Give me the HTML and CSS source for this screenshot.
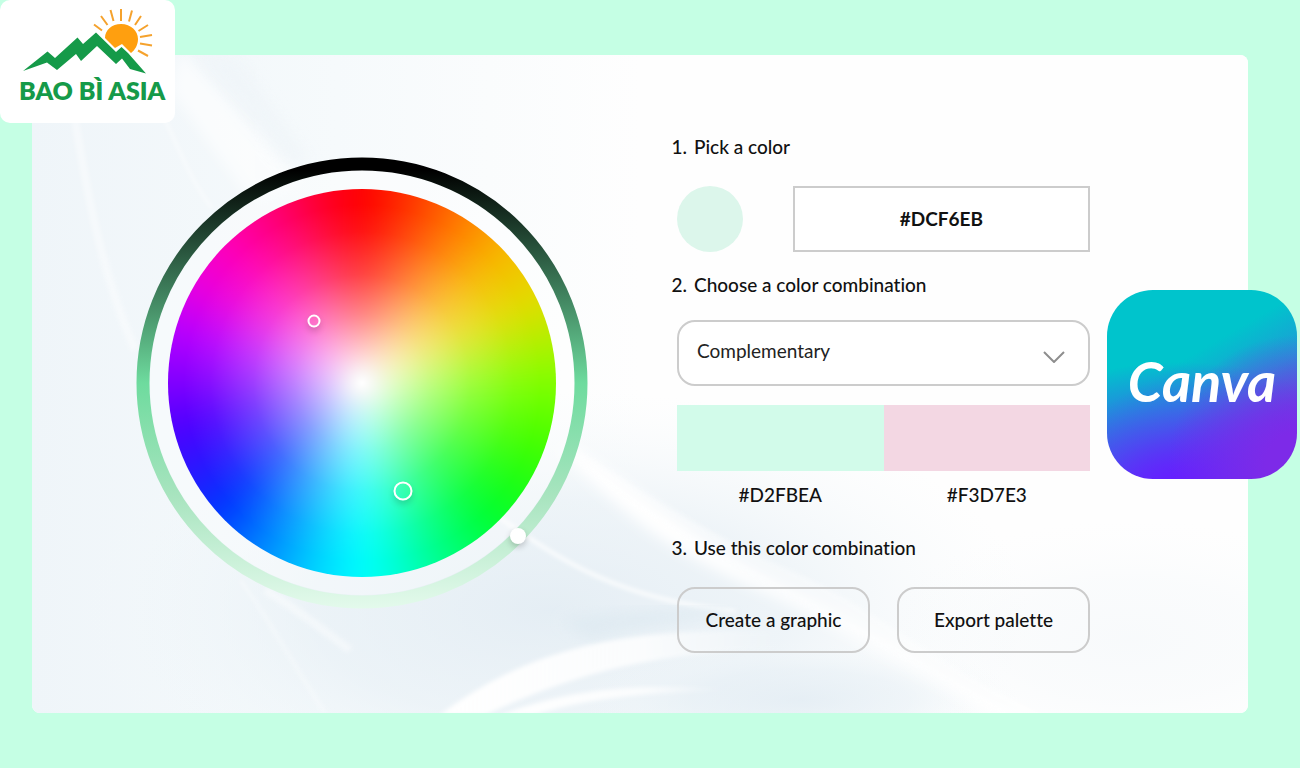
FILE: index.html
```html
<!DOCTYPE html>
<html lang="en">
<head>
  <meta charset="UTF-8" />
  <meta name="viewport" content="width=device-width, initial-scale=1" />
  <title>Color Wheel - Bao Bì Asia</title>
  <link rel="stylesheet" href="styles.css">
</head>
<body>

  <header class="brand">
    <svg class="brand-logo" viewBox="0 0 175 123" role="img" aria-label="Bao Bì Asia">
      <g stroke="#f5a22d" stroke-width="2">
        <path d="M94 24.500L102 30.500M101 16L107.500 25M110.500 10L113.500 21M121 9V21M132 10.500L129 21.500M141 16L135 25M148 25L138.500 31M152 35L140 37M152 45.500L140 43.500M148 56L138 50.500" />
      </g>
      <path fill="#ff9f0f" d="M105 38C105 30 112 24 121 24C131 24 138 31 138 39C138 45 135 50 131 53L122 44L115 48Z" />
      <path fill="#159a49" d="M23 71L47.500 51.500L55 58L77.500 37.500L83 44L96 32.500L116 52L121.500 47L128 53L146 73.500L130 69L122 58.500L116 64L97 46L81 61L76 54L57 70L47 62.500Z" />
      <text class="brand-name" x="19" y="100">BAO BÌ ASIA</text>
    </svg>
  </header>

  <main class="card">
    <svg class="waves" viewBox="32 55 1216 658" preserveAspectRatio="none" aria-hidden="true">
      <defs>
        <linearGradient id="side" x1="0" x2="1" y1="0" y2="0">
          <stop offset="0" stop-color="#eff5f9" />
          <stop offset="0.25" stop-color="#f6fafc" />
          <stop offset="0.5" stop-color="#fefefe" />
        </linearGradient>
        <radialGradient id="pool">
          <stop offset="0" stop-color="#dfeaf2" />
          <stop offset="0.5" stop-color="#e6eff5" stop-opacity="0.8" />
          <stop offset="1" stop-color="#f4f9fb" stop-opacity="0" />
        </radialGradient>
        <linearGradient id="ribbon" x1="0" x2="1" y1="0" y2="0">
          <stop offset="0" stop-color="#fff" />
          <stop offset="0.6" stop-color="#fff" stop-opacity="0.8" />
          <stop offset="1" stop-color="#fff" stop-opacity="0" />
        </linearGradient>
        <filter id="soft"><feGaussianBlur stdDeviation="7" /></filter>
        <filter id="edge"><feGaussianBlur stdDeviation="2" /></filter>
      </defs>
      <rect x="32" y="55" width="1216" height="658" fill="url(#side)" />
      <ellipse cx="550" cy="610" rx="480" ry="220" fill="url(#pool)" opacity="0.8" />
      <ellipse cx="800" cy="700" rx="220" ry="60" fill="url(#pool)" opacity="0.7" />
      <ellipse cx="1130" cy="640" rx="260" ry="120" fill="url(#pool)" opacity="0.2" />
      <path d="M570 445C640 490 690 540 790 590S950 690 1060 725H1010C930 680 850 630 760 590S640 530 560 450Z" fill="#fff" filter="url(#soft)" />
      <path d="M570 445C640 490 700 530 790 570S940 670 1060 720H1010C930 670 850 630 760 580S650 520 575 460Z" fill="#fff" filter="url(#edge)" opacity="0.4" />
      <path d="M500 518C560 560 620 600 735 611" fill="none" stroke="#fff" stroke-width="3" filter="url(#edge)" />
      <path d="M560 620C620 610 680 606 740 611C700 624 640 625 590 640Z" fill="#dbe8f0" filter="url(#soft)" opacity="0.6" />
      <path d="M440 715C520 655 610 625 780 632V650C660 650 570 675 485 715Z" fill="url(#ribbon)" filter="url(#edge)" />
      <path d="M500 715C570 690 630 682 730 690C640 692 580 700 535 715Z" fill="url(#ribbon)" filter="url(#edge)" />
      <path d="M180 50L300 180L250 200L170 90Z" fill="#fff" opacity="0.6" filter="url(#soft)" />
      <path d="M195 50L240 60L310 160L290 165Z" fill="#edf3f7" opacity="0.5" filter="url(#soft)" />
      <g fill="none" stroke="#fff" opacity="0.4" filter="url(#edge)">
        <path stroke-width="8" d="M75 120C85 180 100 270 135 350" />
        <path stroke-width="4" d="M165 120C180 150 190 180 212 208" />
        <path stroke-width="3" d="M240 580C270 620 290 660 325 713" />
        <path stroke-width="8" d="M265 590C290 605 310 620 350 650" />
      </g>
    </svg>

    <div class="wheel">
      <svg class="ring" viewBox="0 0 452 452" aria-hidden="true">
        <defs>
          <linearGradient id="shade" gradientUnits="userSpaceOnUse" x1="0" x2="0" y1="0" y2="452">
            <stop offset="0.03" stop-color="#000" />
            <stop offset="0.25" stop-color="#33694c" />
            <stop offset="0.5" stop-color="#6edb9e" />
            <stop offset="0.75" stop-color="#a8e4bf" />
            <stop offset="1" stop-color="#e4faec" />
          </linearGradient>
        </defs>
        <circle cx="226" cy="226" r="212" fill="#fff" opacity="0.35" />
        <circle cx="226" cy="226" r="219" fill="none" stroke="url(#shade)" stroke-width="13" />
      </svg>
      <div class="hues"></div>
      <button class="marker marker-small" type="button" aria-label="Complementary color"></button>
      <button class="marker marker-large" type="button" aria-label="Base color"></button>
      <button class="knob" type="button" aria-label="Brightness"></button>
    </div>

    <form class="panel">
      <h2><span class="step">1.</span><label for="hex">Pick a color</label></h2>
      <div class="pick">
        <span class="dot"></span>
        <input class="hex" id="hex" type="text" value="#DCF6EB" />
      </div>

      <h2><span class="step">2.</span><label for="combo">Choose a color combination</label></h2>
      <div class="combo">
        <select id="combo">
          <option>Complementary</option>
          <option>Monochromatic</option>
          <option>Analogous</option>
          <option>Triadic</option>
        </select>
        <svg class="chevron" viewBox="0 0 22 12" aria-hidden="true">
          <path d="M1 1L11 11L21 1" fill="none" stroke="#8e8e8e" stroke-width="2" />
        </svg>
      </div>
      <div class="swatches">
        <div class="swatch"><span class="fill mint"></span>#D2FBEA</div>
        <div class="swatch"><span class="fill pink"></span>#F3D7E3</div>
      </div>

      <h2><span class="step">3.</span>Use this color combination</h2>
      <div class="actions">
        <button type="button">Create a graphic</button>
        <button type="button">Export palette</button>
      </div>
    </form>

    <div class="canva">Canva</div>
  </main>

</body>
</html>
```
FILE: styles.css
```css
* { box-sizing: border-box; }
body { margin: 0; padding: 55px 52px 55px 32px; background: #c5ffe4; color: #111; font: 500 19px/24px Lato, sans-serif; font-variant-ligatures: none; }

/* logo tag in the page corner */
.brand { position: absolute; top: 0; left: 0; z-index: 2; width: 175px; background: #fff; border-radius: 10px; }
.brand-logo { display: block; width: 100%; }
.brand-name { font: 800 25px Lato, sans-serif; fill: #159a49; }

.card { position: relative; display: flex; justify-content: space-between; align-items: flex-start; gap: 40px; padding: 80px 158px 60px 104px; background: #fff; border-radius: 8px; }
.waves { position: absolute; inset: 0; width: 100%; height: 100%; border-radius: 8px; }

/* color wheel */
.wheel { position: relative; display: grid; place-items: center; flex: 0 1 452px; aspect-ratio: 1; margin-top: 22px; }
.ring { grid-area: 1 / 1; width: 100%; }
.hues { position: relative; grid-area: 1 / 1; z-index: 1; width: 86%; aspect-ratio: 1; border-radius: 50%; overflow: hidden; }
.hues::before, .hues::after { content: ""; position: absolute; }
/* blurred so that the hues run into each other without spokes */
.hues::before {
  inset: -40px; filter: blur(14px);
  background: conic-gradient(#f00, #ff2a00 12deg, #ff8000 32deg, #f8b800 47deg, #e4dc00 64deg, #a8f400 80deg, #80ff00 90deg, #48ff00 108deg, #18ff18 125deg, #00ff38 138deg, #00ff8c 156deg, #00ffd8 170deg, #0ff 180deg, #00d4ff 194deg, #0088ff 211deg, #0038ff 228deg, #2818ff 242deg, #5000ff 257deg, #8000ff 270deg, #b800ff 286deg, #e800e0 300deg, #ff00b8 316deg, #ff0070 334deg, #ff0020 350deg, #f00);
}
.hues::after {
  inset: 0;
  background: radial-gradient(closest-side, #fff, rgba(255, 255, 255, 0.8) 14%, rgba(255, 255, 255, 0.5) 35%, rgba(255, 255, 255, 0.24) 56%, rgba(255, 255, 255, 0.06) 78%, rgba(255, 255, 255, 0) 92%);
}
.marker, .knob { position: absolute; z-index: 2; padding: 0; border-radius: 50%; transform: translate(-50%, -50%); cursor: pointer; }
.marker { border: 2px solid #fff; background: transparent; box-shadow: 0 4px 6px rgba(0, 0, 0, 0.15); }
.marker-small { left: 39.4%; top: 36.2%; width: 13px; height: 13px; }
.marker-large { left: 59%; top: 73.9%; width: 19px; height: 19px; }
.knob { left: 84.5%; top: 83.8%; width: 16px; height: 16px; border: none; background: #fff; box-shadow: 0 3px 6px rgba(0, 0, 0, 0.2); }

/* steps */
.panel { position: relative; flex: 0 1 419px; padding-left: 6px; }
h2 { display: flex; gap: 7px; margin: 0 0 27px -6px; font: inherit; }
.step { width: 16px; text-align: right; }
.pick { display: flex; justify-content: space-between; margin-bottom: 21px; }
.dot { width: 66px; height: 66px; border-radius: 50%; background: #dcf6eb; }
.hex { width: 72%; height: 66px; padding: 0 0 2px; border: 2px solid #ccc; background: #fff; color: #111; font: inherit; font-weight: 700; text-align: center; }
.combo { position: relative; margin: -4px 0 19px; }
.combo select { width: 100%; height: 66px; padding: 0 20px 4px 18px; appearance: none; border: 2px solid #ccc; border-radius: 18px; background: #fff; color: #222; font: inherit; font-weight: 400; }
.chevron { position: absolute; right: 25px; top: 31px; width: 22px; pointer-events: none; }
.swatches { display: flex; margin-bottom: 29px; }
.swatch { flex: 1; text-align: center; }
.fill { display: block; height: 66px; margin-bottom: 12px; }
.mint { background: #d2fbea; }
.pink { background: #f3d7e3; }
.actions { display: flex; gap: 27px; }
.actions button { flex: 1; height: 66px; padding: 0; border: 2px solid #ccc; border-radius: 18px; background: transparent; color: #111; font: inherit; cursor: pointer; }

.canva {
  position: absolute; right: -49px; top: 235px; display: grid; place-items: center; width: 190px; height: 189px; padding-bottom: 8px; border-radius: 46px;
  background:
    radial-gradient(circle at 100% 92%, #7d2ae8 12%, rgba(125, 42, 232, 0) 50%),
    radial-gradient(ellipse 110% 68% at 38% 106%, #6420ff 10%, rgba(100, 32, 255, 0)),
    linear-gradient(150deg, #00c4cc 38%, #1f9ad6 58%, #4a62dc 75%, #6a30e8);
  color: #fff; font: italic 700 56px/60px Lato, sans-serif;
}
```
